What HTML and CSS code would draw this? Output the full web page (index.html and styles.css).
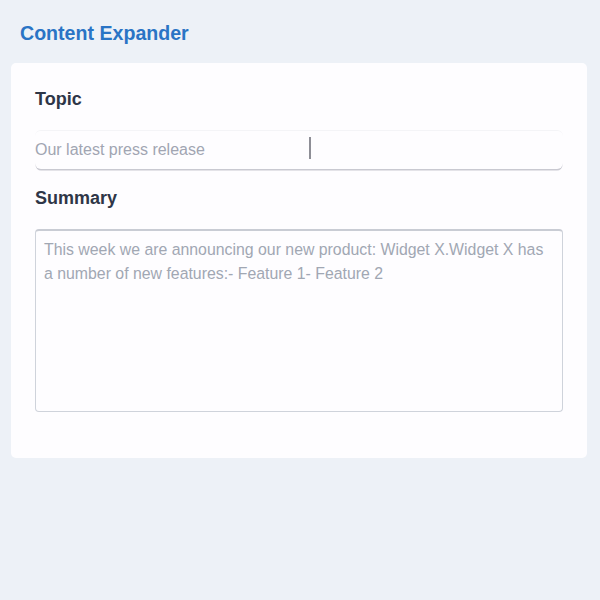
FILE: index.html
```html
<!DOCTYPE html>
<html lang="en">
<head>
  <meta charset="UTF-8" />
  <title>Content Expander</title>
  <link rel="stylesheet" href="styles.css">
</head>
<body>

  <h1 class="title">Content Expander</h1>

  <div class="card">
    <label class="field-label" for="topic">Topic</label>
    <div class="input-wrap">
      <input type="text" id="topic" class="topic-input" placeholder="Our latest press release">
      <span class="caret"></span>
    </div>

    <label class="field-label" for="summary">Summary</label>
    <textarea id="summary" class="summary-input" placeholder="This week we are announcing our new product: Widget X.Widget X has a number of new features:- Feature 1- Feature 2"></textarea>
  </div>

</body>
</html>
```
FILE: styles.css
```css
body {
  margin: 0;
  font-family: "Liberation Sans", Arial, sans-serif;
  background-color: #edf1f7;
  min-height: 100vh;
  padding: 20px 13px 0 11px;
  box-sizing: border-box;
}

.title {
  margin: 0 0 17px 9px;
  font-size: 19.6px;
  line-height: 26px;
  font-weight: bold;
  color: #2a74c5;
}

.card {
  background: #fefdff;
  border-radius: 5px;
  padding: 26px 24px 46px;
  display: flex;
  flex-direction: column;
}

.field-label {
  font-size: 18px;
  line-height: 20px;
  font-weight: bold;
  color: #2e3647;
  margin-bottom: 21px;
}

.input-wrap {
  position: relative;
  margin-bottom: 19px;
}

.topic-input {
  width: 100%;
  box-sizing: border-box;
  height: 39px;
  padding: 0;
  border: none;
  border-top: 1px solid #f4f4f7;
  border-radius: 6px;
  background: #fefdff;
  box-shadow: 0 2px 0 -0.5px #c9c9d1;
  font-family: inherit;
  font-size: 16px;
  color: #2e3647;
  outline: none;
}

.topic-input::placeholder {
  color: #a1a5b2;
}

.caret {
  position: absolute;
  left: 274px;
  top: 7px;
  width: 2px;
  height: 22px;
  background: #8e8e96;
}

.summary-input {
  width: 100%;
  box-sizing: border-box;
  height: 183px;
  padding: 7px 8px;
  border: 1px solid #cfd3db;
  border-top: 2px solid #c9ccd4;
  border-radius: 4px;
  background: #fefdff;
  font-family: inherit;
  font-size: 15.85px;
  line-height: 24px;
  color: #2e3647;
  resize: none;
  outline: none;
}

.summary-input::placeholder {
  color: #a1a7b3;
}
```
